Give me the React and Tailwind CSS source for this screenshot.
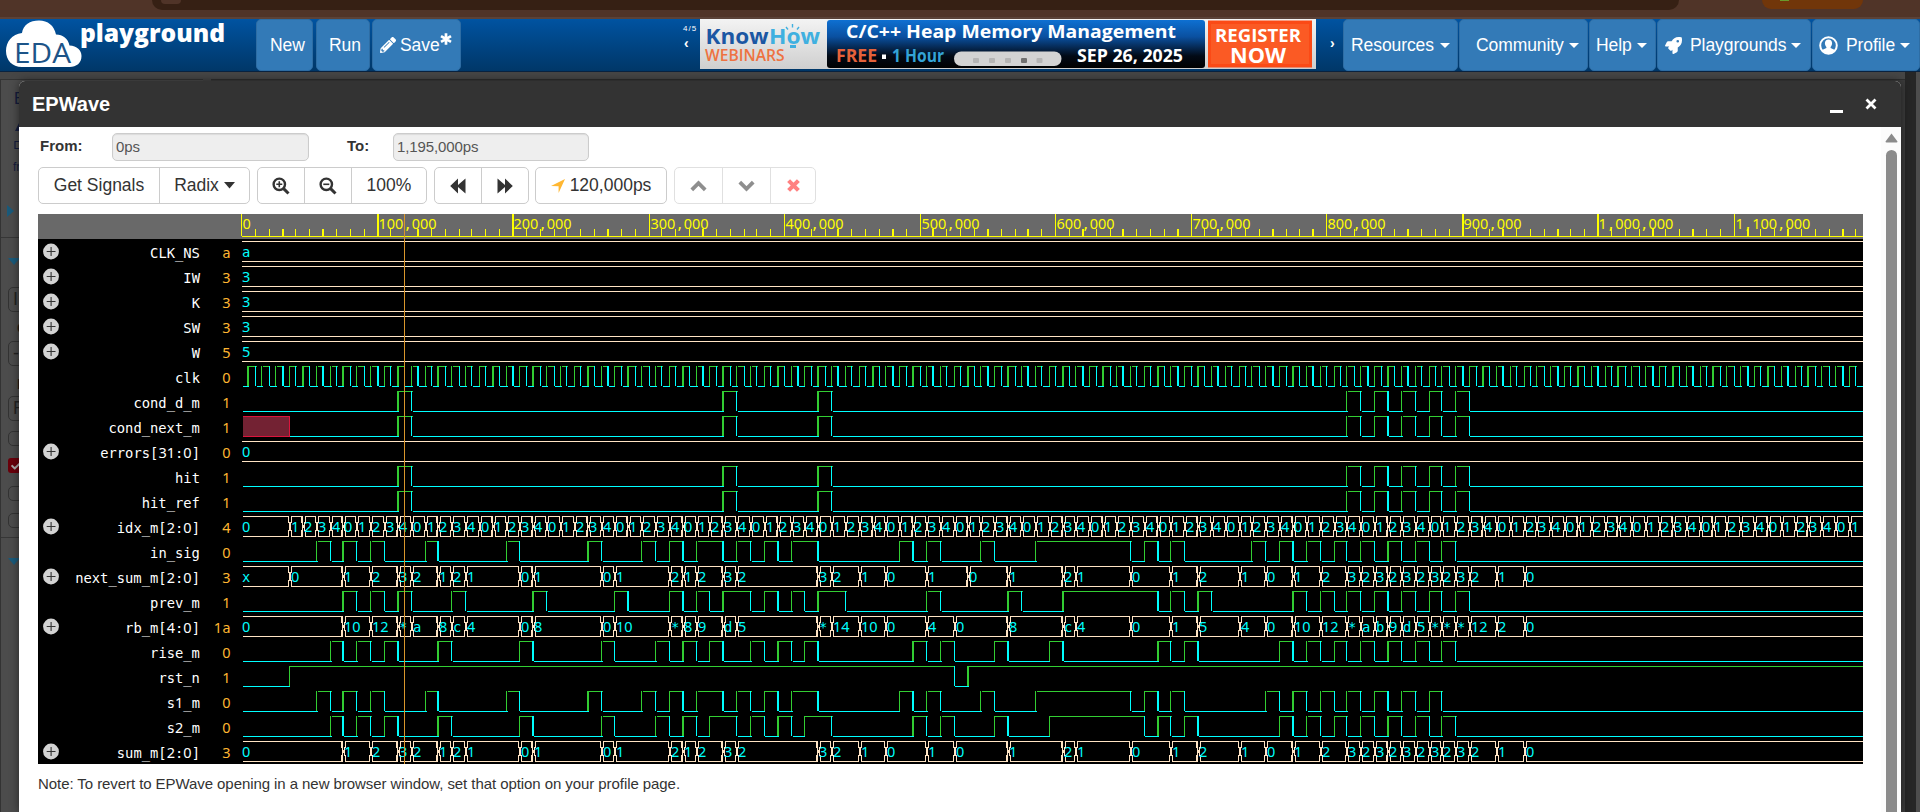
import React from "react";
import { FaPencilAlt, FaRocket, FaCheck } from "react-icons/fa";

const BASE = 241.5;
const END = 1863;
const GREEN = "#32cd32";
const CYAN = "#00ffff";
const PEACH = "#ffe4c4";

// Horizontal step of a time in ns, and the device pixel of a step.
const step = (t) => Math.round(t * 1.0852);
const px = (n) => Math.floor(BASE + 1.25 * n);
const edgeWidth = (n) => (n % 4 === 1 ? 2 : 1);
const after = (n) => Math.round(BASE + 1.25 * (n + 1));
const at = (j) => step(5 + 10 * j);

const HIT = [[11, 12], [35, 36], [42, 43], [81, 82], [83, 84], [85, 86], [87, 88], [89, 90]];
const IN_HEAD = [[5, 6], [7, 8], [9, 10], [13, 14], [19, 20], [25, 26], [29, 30], [31, 32], [33, 35], [36, 37], [38, 39], [40, 42], [48, 49], [50, 51], [54, 55], [58, 65], [66, 67], [68, 69]];
const IN_SIG = [...IN_HEAD, [74, 75], [76, 77], [78, 79], [80, 81], [82, 83], [84, 85], [86, 87], [88, 89]];
const S1 = [...IN_HEAD, [75, 76], [77, 78], [79, 80], [81, 82], [83, 84], [85, 86], [87, 88]];
const PREV = [[7, 8], [9, 10], [11, 12], [15, 16], [21, 22], [27, 28], [31, 32], [33, 34], [35, 37], [38, 39], [40, 41], [42, 44], [50, 51], [56, 57], [60, 67], [68, 69], [70, 71], [77, 78], [79, 80], [81, 82], [83, 84], [85, 86], [87, 88], [89, 90]];
const RISE_TAIL = [[76, 77], [78, 79], [80, 81], [82, 83], [84, 85], [86, 87], [88, 89]];
const RISE = [[6, 7], [8, 9], [10, 11], [14, 15], [20, 21], [26, 27], [30, 31], [32, 33], [34, 35], [37, 38], [39, 40], [41, 42], [49, 50], [51, 52], [55, 56], [59, 60], [67, 68], [69, 70], ...RISE_TAIL];
const S2 = [[6, 7], [8, 9], [10, 11], [14, 15], [20, 21], [26, 27], [30, 31], [32, 33], [34, 36], [37, 38], [39, 40], [41, 43], [49, 50], [51, 52], [55, 56], [59, 66], [67, 68], [69, 70], ...RISE_TAIL];
const SUM_HEAD = [[7, "1"], [9, "2"], [11, "3"], [12, "2"], [14, "1"], [15, "2"], [16, "1"], [20, "0"], [21, "1"], [26, "0"], [27, "1"], [31, "2"], [32, "1"], [33, "2"], [35, "3"], [36, "2"], [42, "3"], [43, "2"], [45, "1"], [47, "0"], [50, "1"]];
const SUM_TAIL = [[56, "1"], [60, "2"], [61, "1"], [65, "0"], [68, "1"], [70, "2"], [73, "1"], [75, "0"], [77, "1"], [79, "2"], [81, "3"], [82, "2"], [83, "3"], [84, "2"], [85, "3"], [86, "2"], [87, "3"], [88, "2"], [89, "3"], [90, "2"], [92, "1"], [94, "0"]];
const RB = [[7, "10"], [9, "12"], [11, "*"], [12, "a"], [14, "8"], [15, "c"], [16, "4"], [20, "0"], [21, "8"], [26, "0"], [27, "10"], [31, "*"], [32, "8"], [33, "9"], [35, "d"], [36, "5"], [42, "*"], [43, "14"], [45, "10"], [47, "0"], [50, "4"], [52, "0"], [56, "8"], [60, "c"], [61, "4"], [65, "0"], [68, "1"], [70, "5"], [73, "4"], [75, "0"], [77, "10"], [79, "12"], [81, "*"], [82, "a"], [83, "b"], [84, "9"], [85, "d"], [86, "5"], [87, "*"], [88, "*"], [89, "*"], [90, "12"], [92, "2"], [94, "0"]];
const IDX = Array.from({ length: 116 }, (_, i) => [i + 3, String((i + 1) % 5)]);

const ROWS = [
  { name: "CLK_NS", value: "a", first: "a", bus: [] },
  { name: "IW", value: "3", first: "3", bus: [] },
  { name: "K", value: "3", first: "3", bus: [] },
  { name: "SW", value: "3", first: "3", bus: [] },
  { name: "W", value: "5", first: "5", bus: [] },
  { name: "clk", value: "0", clock: true },
  { name: "cond_d_m", value: "1", highs: HIT },
  { name: "cond_next_m", value: "1", highs: HIT, unknown: 3 },
  { name: "errors[31:0]", value: "0", first: "0", bus: [] },
  { name: "hit", value: "1", highs: HIT },
  { name: "hit_ref", value: "1", highs: HIT },
  { name: "idx_m[2:0]", value: "4", first: "0", bus: IDX },
  { name: "in_sig", value: "0", highs: IN_SIG },
  { name: "next_sum_m[2:0]", value: "3", first: "x", bus: [[3, "0"], ...SUM_HEAD, [53, "0"], ...SUM_TAIL] },
  { name: "prev_m", value: "1", highs: PREV },
  { name: "rb_m[4:0]", value: "1a", first: "0", bus: RB },
  { name: "rise_m", value: "0", highs: RISE },
  { name: "rst_n", value: "1", highs: [[3, 52], [53, 200]] },
  { name: "s1_m", value: "0", highs: S1 },
  { name: "s2_m", value: "0", highs: S2 },
  { name: "sum_m[2:0]", value: "3", first: "0", bus: [...SUM_HEAD, [52, "0"], ...SUM_TAIL] },
];

// Monospaced run: each glyph sits in its own 8.3px cell.
function Mono({ x, y, fill, children, end }) {
  const cell = 8.32;
  const start = end ? x - cell * children.length : x;
  const parts = children.match(/\d+|[^\d]+/g);
  let i = 0;
  return (
    <text y={y} fill={fill} className="font-['DejaVu_Sans_Mono',monospace] text-[13.8px]">
      {parts.map((p, k) => {
        const sx = start + cell * i;
        i += p.length;
        return (
          <tspan key={k} x={sx} className={/\d/.test(p) ? "font-['Noto_Sans',sans-serif] text-[14.5px]" : ""}>{p}</tspan>
        );
      })}
    </text>
  );
}

function Digital({ edges, top, unknown }) {
  const out = [];
  let from = unknown != null ? px(at(unknown)) + 1 : 243;
  let high = false;
  edges.forEach((n, i) => {
    const x = px(n);
    if (x >= END) return;
    out.push(<rect key={"h" + i} x={from} y={high ? top : top + 20} width={Math.max(0, after(n) - from)} height="1" fill={high ? GREEN : CYAN} />);
    out.push(<rect key={"v" + i} x={x} y={top} width={edgeWidth(n)} height="20" fill={high ? CYAN : GREEN} />);
    from = after(n);
    high = !high;
  });
  out.push(<rect key="last" x={from} y={high ? top : top + 20} width={Math.max(0, END - from)} height="1" fill={high ? GREEN : CYAN} />);
  return (
    <g>
      {unknown != null && (
        <g>
          <rect x="243" y={top} width="47" height="21" fill="#dc143c" />
          <rect x="243" y={top + 1} width="46" height="19" fill="#732233" />
        </g>
      )}
      {out}
    </g>
  );
}

function Bus({ first, bus, top }) {
  const edges = bus.map(([j]) => ({ x: px(at(j)), w: edgeWidth(at(j)) }));
  const starts = [bus.length ? 243 : 242, ...edges.map((e) => e.x + 1 + e.w)];
  const ends = [...edges.map((e) => e.x), END];
  const labels = [first, ...bus.map((b) => b[1])];
  return (
    <g>
      {starts.map((s, i) => (
        <g key={i} fill={PEACH}>
          <rect x={s} y={top} width={Math.max(0, ends[i] - s)} height="1" />
          <rect x={s} y={top + 20} width={Math.max(0, ends[i] - s)} height="1" />
        </g>
      ))}
      {edges.map(({ x, w }, i) => (
        <g key={i} fill={PEACH}>
          <rect x={x - 1} y={top} width={w} height="7" />
          <rect x={x - 1} y={top + 14} width={w} height="7" />
          <rect x={x + w + 1} y={top} width="1" height="7" />
          <rect x={x + w + 1} y={top + 14} width="1" height="7" />
          <rect x={x} y={top + 6} width="1" height="9" />
          <rect x={x + w} y={top + 6} width="1" height="9" />
          <rect x={x} y={top + 9} width={w + 1} height="3" />
        </g>
      ))}
      {labels.map((l, i) => (
        <Mono key={i} x={i ? edges[i - 1].x + 2 : 242} y={top + 16} fill={CYAN}>{l}</Mono>
      ))}
    </g>
  );
}

const CLOCK = Array.from({ length: 238 }, (_, i) => step(5 * (i + 1)));
const fmt = (n) => (n ? (n * 1000).toLocaleString("en-US") : "0");

function Waves() {
  return (
    <svg className="block" width="1825" height="550" viewBox="38 214 1825 550" shapeRendering="crispEdges">
      <rect x="38" y="214" width="1825" height="550" fill="#000" />
      <rect x="38" y="214" width="1825" height="25" fill="#696969" />
      <rect x="242" y="236" width="1621" height="1" fill="#ff0" />
      {Array.from({ length: 120 }, (_, i) => {
        const n = step(i * 10);
        const major = i % 10 === 0;
        return <rect key={i} x={px(n)} y={major ? 214 : 229} width={edgeWidth(n)} height={major ? 22 : 7} fill="#ff0" />;
      })}
      {Array.from({ length: 12 }, (_, i) => (
        <Mono key={i} x={px(step(i * 100)) + 1.5} y={229} fill="#ff0">{fmt(i * 100)}</Mono>
      ))}
      {ROWS.map((r, i) => {
        const top = 241 + 25 * i;
        return (
          <g key={r.name}>
            {r.bus && (
              <g shapeRendering="auto">
                <circle cx="51" cy={top + 10.5} r="7.9" fill="#d3d3d3" />
                <path d={`M46.7 ${top + 10.5}h8.8M51.1 ${top + 6.1}v8.8`} stroke="#333" strokeWidth="1.1" />
              </g>
            )}
            <Mono x={200} y={top + 17} fill="#fff" end>{r.name}</Mono>
            <Mono x={230.5} y={top + 17} fill="#ffb732" end>{r.value}</Mono>
            {r.bus ? <Bus first={r.first} bus={r.bus} top={top} /> : (
              <Digital edges={r.clock ? CLOCK : r.highs.flat().map(at)} top={top} unknown={r.unknown} />
            )}
          </g>
        );
      })}
      <rect x="404" y="214" width="1" height="550" fill="#d9962b" />
    </svg>
  );
}

function Caret({ className = "", width = 10, height = 5 }) {
  return <svg className={className} width={width} height={height} viewBox="0 0 10 5" preserveAspectRatio="none"><path d="M0 0h10L5 5z" fill="currentColor" /></svg>;
}

function Zoom({ plus }) {
  return (
    <svg width="18" height="18" viewBox="0 0 18 18" fill="none" stroke="#333">
      <circle cx="7.3" cy="7.3" r="5.7" strokeWidth="2.4" />
      <path d="M11.6 11.6l4.9 4.9" strokeWidth="3" />
      <path d={plus ? "M4.3 7.3h6M7.3 4.3v6" : "M4.3 7.3h6"} strokeWidth="1.6" />
    </svg>
  );
}

function Cross({ size, color, w }) {
  return <svg width={size} height={size} viewBox="0 0 12 12"><path d="M1.5 1.5l9 9M10.5 1.5l-9 9" stroke={color} strokeWidth={w} /></svg>;
}

function Wind({ flip }) {
  return (
    <svg className={flip ? "-scale-x-100" : ""} width="16" height="16" viewBox="0 0 16 16">
      <path d="M8 .5v6.600l7.500-6.600v15L8 8.900v6.600L.2 8z" fill="#333" />
    </svg>
  );
}

function Chevron({ down }) {
  return (
    <svg className={down ? "-scale-y-100" : ""} width="17" height="12" viewBox="0 0 17 12">
      <path d="M1.800 9.800L8.500 3.100l6.700 6.700" fill="none" stroke="#444" strokeWidth="3.800" />
    </svg>
  );
}

function Asterisk() {
  return (
    <svg className="mb-[12px]" width="12" height="12" viewBox="0 0 12 12">
      <path d="M6 .3v11.400M1 3.100l10 5.800M11 3.100L1 8.900" stroke="#fff" strokeWidth="2.700" />
    </svg>
  );
}

function UserBadge() {
  return (
    <svg className="mr-2 shrink-0" width="19" height="19" viewBox="0 0 19 19">
      <circle cx="9.500" cy="9.500" r="8.300" fill="none" stroke="#fff" strokeWidth="2" />
      <path d="M9.500 3.600c2.200 0 3.600 1.600 3.600 3.700 0 1.500-.7 2.900-1.500 3.700v.9l4.300 2.200c-1.400 2.200-3.600 3.400-6.400 3.400s-5-1.200-6.400-3.400l4.300-2.200v-.9c-.8-.8-1.500-2.200-1.500-3.700 0-2.100 1.400-3.700 3.600-3.700z" fill="#fff" />
    </svg>
  );
}

function Banner() {
  return (
    <svg className="block shrink-0" width="616" height="50" viewBox="700 19 616 50">
      <defs>
        <linearGradient id="paper" x1="0" y1="0" x2="0" y2="1"><stop offset="0" stopColor="#f3f3f3" /><stop offset="1" stopColor="#cfcfcf" /></linearGradient>
        <linearGradient id="night" x1="0" y1="0" x2="0" y2="1"><stop offset="0" stopColor="#0e70d2" /><stop offset=".35" stopColor="#0a50a0" /><stop offset=".75" stopColor="#020a16" /><stop offset="1" stopColor="#000" /></linearGradient>
      </defs>
      <rect x="700" y="19" width="616" height="50" fill="url(#paper)" />
      <rect x="827" y="20" width="378" height="48" rx="3" fill="url(#night)" />
      <g className="font-['Open_Sans',sans-serif] font-bold">
        <text x="705.5" y="43.500" fontSize="20.500" fill="#1b57a3" textLength="63" lengthAdjust="spacingAndGlyphs">Know</text>
        <text x="769" y="43.500" fontSize="20.500" fill="#40b0e0" textLength="51" lengthAdjust="spacingAndGlyphs">How</text>
        <path d="M790 46.500h6" stroke="#40b0e0" strokeWidth="3" /><path d="M792.5 24v3.500M786 27l2 2.500M799 27l-2 2.500" stroke="#40b0e0" strokeWidth="1.400" />
        <text x="705" y="61" fontSize="15.5" fill="#ee7241" fontWeight="600" textLength="79.500" lengthAdjust="spacingAndGlyphs">WEBINARS</text>
        <text x="846" y="38" fontSize="18.5" fill="#fff" textLength="330" lengthAdjust="spacingAndGlyphs">C/C++ Heap Memory Management</text>
        <text x="836" y="62" fontSize="17.5" fill="#e5623a" textLength="41" lengthAdjust="spacingAndGlyphs">FREE</text>
        <rect x="882" y="54.500" width="4" height="4.500" fill="#fff" />
        <text x="892" y="62" fontSize="17.5" fill="#33a3d6" textLength="52" lengthAdjust="spacingAndGlyphs">1 Hour</text>
        <text x="1077" y="62" fontSize="17.5" fill="#fff" textLength="106" lengthAdjust="spacingAndGlyphs">SEP 26, 2025</text>
      </g>
      <rect x="954" y="51.500" width="107.500" height="14.500" rx="7.200" fill="#d3d3d3" />
      {[973, 989, 1005, 1021, 1036.5].map((x, i) => (
        <rect key={x} x={x} y="58" width="6" height="5" rx="1" fill={i === 3 ? "#707070" : "#b5b5b5"} />
      ))}
      <rect x="1208" y="20.500" width="104" height="47" fill="#fb4a16" />
      <rect x="1211" y="24" width="98" height="40" fill="#fb5a24" />
      <g className="font-['Open_Sans',sans-serif] font-bold" fill="#fff">
        <text x="1215" y="41.500" fontSize="17.500" textLength="86" lengthAdjust="spacingAndGlyphs">REGISTER</text>
        <text x="1230" y="62.500" fontSize="20.500" textLength="56" lengthAdjust="spacingAndGlyphs">NOW</text>
      </g>
    </svg>
  );
}

function Logo() {
  return (
    <svg className="block shrink-0 overflow-visible" width="256" height="52" viewBox="0 19 256 52">
      <path d="M22 67C12 67 6 60 6 51c0-9 6-17 16-18 1-8 8-12.500 17-12.500 9 0 15 5 17 14 7 0 12 4 13.500 11C77 46 81.500 50 81.500 56c0 7-5 11-12 11z" fill="#fff" />
      <text x="14" y="62.500" fontSize="28" fill="#1c5488" textLength="57" className="font-['Open_Sans',sans-serif]" lengthAdjust="spacingAndGlyphs">EDA</text>
      <text x="80" y="41.500" fontSize="24" fill="#fff" textLength="145" lengthAdjust="spacingAndGlyphs" className="font-['Open_Sans',sans-serif] font-extrabold">playground</text>
    </svg>
  );
}

const NAV = "flex h-[52px] items-center rounded-[5px] border border-[#2e6da4] bg-[#337ab7] text-[17.5px] leading-5 tracking-[-0.08px] text-white";
const GROUP = "flex h-[37px] divide-x divide-[#ccc] rounded-[5px] border border-[#ccc] bg-white text-[17.5px] text-[#333]";
const CELL = "flex items-center justify-center";
const FIELD = "h-7 rounded-[5px] border border-[#ccc] bg-[#eee] pl-[3px] text-[15px] leading-[26px] tracking-[-0.1px] text-[#555] shadow-[inset_0_1px_1px_rgba(0,0,0,0.08)]";

function Navbar() {
  return (
    <header className="flex h-[53px] border-b border-[#0a2340] bg-linear-to-b from-[#0053a1] to-[#003768]">
      <Logo />
      <div className="flex w-[427px]">
        <button className={NAV + " w-[57px] pl-[13px]"}>New</button>
        <button className={NAV + " ml-[3px] w-[54px] pl-[12px]"}>Run</button>
        <button className={NAV + " ml-[2px] w-[89px] pl-[7px]"}>
          <FaPencilAlt className="mr-1 size-4" />Save<Asterisk />
        </button>
      </div>
      <div className="flex w-[17px] flex-col text-[8px] leading-[8px] text-white">
        <span className="mt-[6px] tracking-[1px]">4/5</span>
        <span className="mt-[4px] pl-px text-[14px] font-bold leading-3">‹</span>
      </div>
      <Banner />
      <span className="w-[27px] pl-[14px] pt-[16px] text-[14px] font-bold leading-4 text-white">›</span>
      <button className={NAV + " w-[115px] pl-[7px]"}>Resources<Caret className="ml-[6px]" /></button>
      <button className={NAV + " ml-px w-[129px] pl-[16px]"}>Community<Caret className="ml-[5px]" /></button>
      <button className={NAV + " ml-px w-[67px] pl-[6px]"}>Help<Caret className="ml-[5px]" /></button>
      <button className={NAV + " ml-px w-[154px] pl-[7px]"}><FaRocket className="mr-[8px] size-[17px]" />Playgrounds<Caret className="ml-[5px]" /></button>
      <button className={NAV + " ml-px w-[108px] pl-[6px]"}><UserBadge />Profile<Caret className="ml-[5px]" /></button>
    </header>
  );
}

function Backdrop() {
  const box = "ml-[7px] w-8 shrink-0 rounded-[5px] border border-[#333] pl-1 text-[18px] leading-[23px] text-[#222]";
  const tri = <svg className="ml-[7px] shrink-0" width="12" height="7"><path d="M0 0h12L6 7z" fill="#1a5a7a" /></svg>;
  return (
    <div className="flex h-[741px] bg-[#464646]">
      <aside className="mt-[7px] flex w-[203px] flex-col overflow-hidden border-l border-t border-[#333] bg-[#4c4c4c] text-[#141c3c]">
        <span className="ml-[13px] mt-[9px] h-[28px] text-[16px] leading-5">E</span>
        <svg className="ml-[14px] mt-[4px] shrink-0" width="10" height="10"><path d="M0 10L5 0l5 10z" fill="#141c3c" /></svg>
        <svg className="ml-[13px] mt-[10px] shrink-0" width="9" height="9"><path d="M1 .500h5.500v7H1z" fill="none" stroke="#141c3c" strokeWidth="1.200" /></svg>
        <span className="ml-[12px] mt-[9px] h-[46px] text-[12px] leading-4">fr</span>
        <svg className="ml-[6px] shrink-0" width="7" height="12"><path d="M0 0v12l7-6z" fill="#1a5a7a" /></svg>
        <div className="mt-[20px] h-px shrink-0 bg-[#363636]" />
        <div className="mt-[20px] flex">{tri}</div>
        <div className={box + " mt-[22px] h-[25px]"}>I</div>
        <span className="ml-[16px] mt-[6px] h-[20px] shrink-0 text-[15px] font-bold leading-5 text-[#1d1814]">C</span>
        <div className={box + " mt-[3px] h-[25px]"}>-</div>
        <span className="ml-[16px] mt-[8px] h-[20px] shrink-0 text-[15px] font-bold leading-5 text-[#1d1814]">R</span>
        <div className={box + " mt-[2px] h-[25px]"}>R</div>
        <div className={box + " mt-[10px] h-[15px]"} />
        <div className="ml-[7px] mt-[12px] flex size-[15px] shrink-0 items-center justify-center rounded-[3px] bg-[#6a000b] text-[10px] text-[#aaa]"><FaCheck /></div>
        <div className={box + " mt-[13px] h-[15px]"} />
        <div className={box + " mt-[12px] h-[15px]"} />
        <div className="mt-[9px] h-px shrink-0 bg-[#363636]" />
        <div className="mt-[20px] flex">{tri}</div>
      </aside>
      <div className="ml-2 mt-[7px] flex flex-1 border-t border-[#2e2e2e] bg-[#3b3b3b]">
        <div className="ml-[53px] mt-px h-2 w-[99px] bg-[#10162b]" />
        <div className="ml-[738px] mt-px h-2 w-[83px] bg-[#10162b]" />
      </div>
      <div className="flex w-[15px] bg-[#262626]"><div className="ml-[11px] flex-1 bg-[#4d4d4d]" /></div>
    </div>
  );
}

export default function App() {
  return (
    <div className="relative h-[812px] w-[1920px] overflow-hidden bg-[#503428] font-['Liberation_Sans',Arial,sans-serif]">
      <div className="flex h-[17px] items-start">
        <div className="ml-[152px] h-[10px] w-[1527px] rounded-b-[14px] bg-[#362014]">
          <div className="ml-[9px] h-1 w-[20px] rounded-b-full bg-[#503428]" />
        </div>
        <div className="ml-[83px] h-[9px] w-[101px] rounded-b-[14px] bg-[#71360a] pl-[18px]">
          <div className="h-px w-[9px] bg-[#6a9a2c]" />
        </div>
      </div>
      <div className="h-[2px] bg-[#5b4238]" />
      <Navbar />
      <Backdrop />
      <main className="absolute left-[19px] top-[81px] flex h-[731px] w-[1882px] flex-col rounded-t-[6px] bg-white shadow-[0_0_10px_0_rgba(0,0,0,0.5)]">
        <div className="flex h-[46px] shrink-0 items-center rounded-t-[6px] bg-[#333] pl-[13px]">
          <h1 className="mb-px flex-1 text-[20px] font-bold leading-6 text-white">EPWave</h1>
          <div className="mr-[22px] mt-[15px] h-[3px] w-[13px] bg-white" />
          <div className="mr-[24px]"><Cross size="12" color="#fff" w="2.8" /></div>
        </div>
        <div className="flex flex-1">
          <div className="flex w-[1862px] flex-col pl-[19px]">
            <div className="mt-[6px] flex h-7">
              <label className="w-[74px] pl-[2px] text-[15px] font-bold leading-[25px] text-[#333]">From:</label>
              <div className={FIELD + " w-[197px]"}>0ps</div>
              <label className="w-[84px] pl-[38px] text-[15px] font-bold leading-[25px] text-[#333]">To:</label>
              <div className={FIELD + " w-[196px]"}>1,195,000ps</div>
            </div>
            <div className="mt-[6px] flex h-[37px]">
              <div className={GROUP}>
                <button className={CELL + " w-[121px]"}>Get Signals</button>
                <button className={CELL + " w-[89px]"}>Radix<Caret className="ml-[5px]" width={11} height={6.5} /></button>
              </div>
              <div className={GROUP + " ml-[7px]"}>
                <button className={CELL + " w-[47px]"}><Zoom plus /></button>
                <button className={CELL + " w-[47px]"}><Zoom /></button>
                <button className={CELL + " w-[74px]"}>100%</button>
              </div>
              <div className={GROUP + " ml-[7px]"}>
                <button className={CELL + " w-[47px]"}><Wind /></button>
                <button className={CELL + " w-[46px]"}><Wind flip /></button>
              </div>
              <div className={GROUP + " ml-[6px]"}>
                <button className={CELL + " w-[130px]"}>
                  <svg className="mr-[5px]" width="14" height="14" viewBox="0 0 14 14"><path d="M14 0L7.600 14V7.200L0 7z" fill="#ffb732" /></svg>120,000ps
                </button>
              </div>
              <div className={GROUP + " ml-[7px] opacity-60"}>
                <button className={CELL + " w-[48px]"}><Chevron /></button>
                <button className={CELL + " w-[48px]"}><Chevron down /></button>
                <button className={CELL + " w-[44px]"}><Cross size="13" color="#ff2e2e" w="3.8" /></button>
              </div>
            </div>
            <div className="mt-[10px]"><Waves /></div>
            <p className="mt-[10px] text-[15px] leading-5 tracking-[-0.07px] text-[#333]">Note: To revert to EPWave opening in a new browser window, set that option on your profile page.</p>
          </div>
          <div className="flex flex-1 flex-col bg-[#fcfcfc] pl-[4px] pt-[6px]">
            <svg width="13" height="10"><path d="M6.500 0.500L12.500 8.500Q12.500 9.500 11.500 9.500H1.500Q.5 9.500 .5 8.500z" fill="#8b8b8b" /></svg>
            <div className="ml-px mt-[7px] w-[11px] flex-1 rounded-t-full bg-[#8b8b8b]" />
          </div>
        </div>
      </main>
    </div>
  );
}
